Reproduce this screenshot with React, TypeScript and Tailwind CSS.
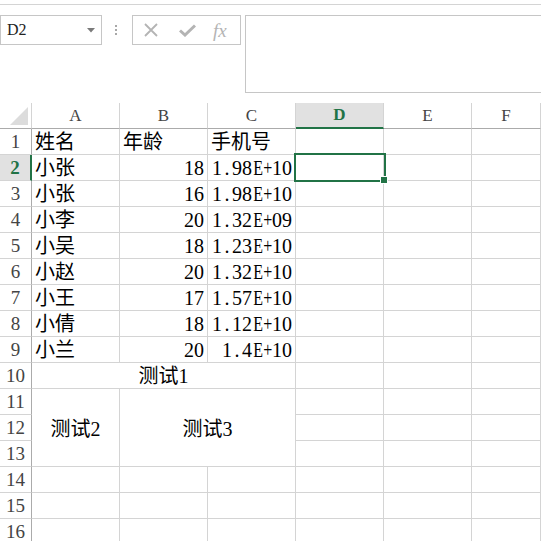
import React from "react";

type Cell = { t?: string; align?: "l" | "r" | "c"; mono?: boolean };

const rows: Cell[][] = [
  [{ t: "姓名" }, { t: "年龄" }, { t: "手机号" }],
  [{ t: "小张" }, { t: "18", align: "r", mono: true }, { t: "1.98E+10", align: "r", mono: true }],
  [{ t: "小张" }, { t: "16", align: "r", mono: true }, { t: "1.98E+10", align: "r", mono: true }],
  [{ t: "小李" }, { t: "20", align: "r", mono: true }, { t: "1.32E+09", align: "r", mono: true }],
  [{ t: "小吴" }, { t: "18", align: "r", mono: true }, { t: "1.23E+10", align: "r", mono: true }],
  [{ t: "小赵" }, { t: "20", align: "r", mono: true }, { t: "1.32E+10", align: "r", mono: true }],
  [{ t: "小王" }, { t: "17", align: "r", mono: true }, { t: "1.57E+10", align: "r", mono: true }],
  [{ t: "小倩" }, { t: "18", align: "r", mono: true }, { t: "1.12E+10", align: "r", mono: true }],
  [{ t: "小兰" }, { t: "20", align: "r", mono: true }, { t: "1.4E+10", align: "r", mono: true }],
];

const cols = ["A", "B", "C", "D", "E", "F"];

// half-width fixed pitch, like the sheet's font
function Mono({ t }: { t: string }) {
  return (
    <span className="inline-flex">
      {t.split("").map((c, i) => (
        <span key={i} className="inline-block w-[10px] text-center overflow-visible">
          {c === "E" || c === "+" ? <span className="inline-block scale-x-[0.8]">{c}</span> : c}
        </span>
      ))}
    </span>
  );
}

function RowHead({ n, active }: { n: number; active?: boolean }) {
  return (
    <div
      className={
        active
          ? "flex items-center justify-center pt-[1px] bg-[#e1e1e1] border-r-2 border-r-[#217346] border-b border-b-[#d4d4d4] text-[19px] font-bold text-[#217346]"
          : "flex items-center justify-center pt-[1px] border-r border-r-[#ababab] border-b border-b-[#d4d4d4] text-[19px] text-[#444]"
      }
    >
      {n}
    </div>
  );
}

function DataCell({ c }: { c?: Cell }) {
  const align = c?.align === "r" ? "justify-end pr-[3px]" : "justify-start pl-[3px]";
  return (
    <div className={`flex items-end border-r border-b border-[#d4d4d4] text-[20px] leading-[24px] text-black ${align}`}>
      {c?.t ? (c.mono ? <Mono t={c.t} /> : c.t) : null}
    </div>
  );
}

function Empty({ selected }: { selected?: boolean }) {
  return (
    <div className="relative border-r border-b border-[#d4d4d4]">
      {selected && (
        <>
          <div className="absolute -left-[2px] -top-[2px] w-[92px] h-[29px] border-2 border-[#217346] z-10" />
          <div className="absolute left-[84px] top-[21px] w-[6px] h-[6px] bg-[#217346] border border-white z-20 box-content" />
        </>
      )}
    </div>
  );
}

export default function App() {
  return (
    <div
      className="w-[541px] h-[541px] overflow-hidden bg-white"
      style={{ fontFamily: "'Liberation Serif', 'Noto Sans CJK SC', serif" }}
    >
      {/* top strip */}
      <div className="h-[4px]" />
      <div className="h-px bg-[#d4d4d4]" />

      {/* name box + formula bar */}
      <div className="flex items-start mt-[10px] h-[78px]">
        <div className="flex items-center justify-between w-[102px] h-[30px] border border-[#c6c6c6] pl-[6px] pr-[6px]">
          <span className="text-[16px] text-[#222]">D2</span>
          <svg width="8" height="5" viewBox="0 0 8 5">
            <path d="M0 0 H8 L4 4.5 Z" fill="#7a7a7a" />
          </svg>
        </div>
        <div className="flex flex-col gap-[2px] w-[2px] ml-[13px] mt-[10px]">
          <span className="block w-[2px] h-[2px] bg-[#a8a8a8]" />
          <span className="block w-[2px] h-[2px] bg-[#a8a8a8]" />
          <span className="block w-[2px] h-[2px] bg-[#a8a8a8]" />
        </div>
        <div className="flex items-center w-[109px] h-[30px] border border-[#c6c6c6] ml-[15px]">
          <svg width="14" height="14" viewBox="0 0 14 14" className="ml-[11px]">
            <path d="M1 1 L13 13 M13 1 L1 13" stroke="#b4b4b4" strokeWidth="1.8" />
          </svg>
          <svg width="17" height="14" viewBox="0 0 17 14" className="ml-[21px]">
            <path d="M1 7.5 L6 12 L16 2.5" stroke="#b4b4b4" strokeWidth="3" fill="none" />
          </svg>
          <span className="ml-[17px] text-[19px] italic text-[#b4b4b4] leading-none">fx</span>
        </div>
        <div className="flex-1 h-[78px] border-l border-t border-b border-[#c6c6c6] ml-[4px]" />
      </div>

      {/* sheet */}
      <div className="grid grid-cols-[32px_repeat(5,88px)_1fr] auto-rows-[26px] mt-[10px]">
        {/* header row */}
        <div className="relative border-r border-r-[#d4d4d4] border-b border-b-[#ababab]">
          <svg width="18" height="18" viewBox="0 0 18 18" className="absolute left-[10px] top-[4px]">
            <path d="M18 0 V18 H0 Z" fill="#dcdcdc" />
          </svg>
        </div>
        {cols.map((c) =>
          c === "D" ? (
            <div
              key={c}
              className="flex items-center justify-center bg-[#e1e1e1] border-r border-r-[#d4d4d4] border-b-2 border-b-[#217346] text-[17px] font-bold text-[#217346]"
            >
              {c}
            </div>
          ) : (
            <div
              key={c}
              className="flex items-center justify-center border-r border-r-[#d4d4d4] border-b border-b-[#ababab] text-[17px] text-[#444]"
            >
              {c}
            </div>
          )
        )}

        {/* data rows 1-9 */}
        {rows.map((r, i) => (
          <React.Fragment key={i}>
            <RowHead n={i + 1} active={i === 1} />
            <DataCell c={r[0]} />
            <DataCell c={r[1]} />
            <DataCell c={r[2]} />
            <Empty selected={i === 1} />
            <Empty />
            <Empty />
          </React.Fragment>
        ))}

        {/* row 10: merged A:C */}
        <RowHead n={10} />
        <div className="col-span-3 flex items-end justify-center border-r border-b border-[#d4d4d4] text-[20px] leading-[24px]">
          测试1
        </div>
        <Empty />
        <Empty />
        <Empty />

        {/* rows 11-13 */}
        <RowHead n={11} />
        <div className="row-span-3 flex items-center justify-center pt-[2px] border-r border-b border-[#d4d4d4] text-[20px]">
          测试2
        </div>
        <div className="row-span-3 col-span-2 flex items-center justify-center pt-[2px] border-r border-b border-[#d4d4d4] text-[20px]">
          测试3
        </div>
        <Empty />
        <Empty />
        <Empty />
        <RowHead n={12} />
        <Empty />
        <Empty />
        <Empty />
        <RowHead n={13} />
        <Empty />
        <Empty />
        <Empty />

        {/* rows 14-16 */}
        {[14, 15, 16].map((n) => (
          <React.Fragment key={n}>
            <RowHead n={n} />
            <Empty />
            <Empty />
            <Empty />
            <Empty />
            <Empty />
            <Empty />
          </React.Fragment>
        ))}
      </div>
    </div>
  );
}
